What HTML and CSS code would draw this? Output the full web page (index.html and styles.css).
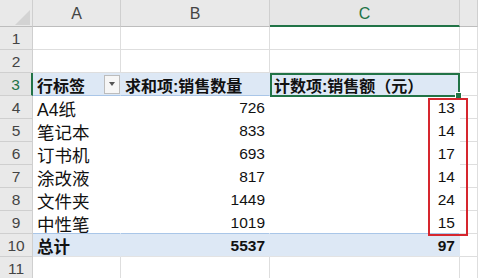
FILE: index.html
```html
<!DOCTYPE html>
<html lang="zh-CN">
<head>
<meta charset="utf-8">
<link rel="stylesheet" href="styles.css">
</head>
<body>
<div class="sheet">
  <div class="hd corner"><span class="tri"></span></div>
  <div class="hd col">A</div>
  <div class="hd col">B</div>
  <div class="hd col sel-col">C</div>
  <div class="hd col last"></div>

  <div class="hd row">1</div><div class="c"></div><div class="c"></div><div class="c"></div><div class="c last"></div>
  <div class="hd row">2</div><div class="c"></div><div class="c"></div><div class="c"></div><div class="c last"></div>

  <div class="hd row sel-row">3</div>
  <div class="c ph txt">行标签<span class="dd"><span class="ddtri"></span></span></div>
  <div class="c ph txt">求和项:销售数量</div>
  <div class="c ph txt">计数项:销售额（元）</div>
  <div class="c last"></div>

  <div class="hd row">4</div><div class="c pb txt">A4纸</div><div class="c pb num">726</div><div class="c pb num">13</div><div class="c last"></div>
  <div class="hd row">5</div><div class="c pb txt">笔记本</div><div class="c pb num">833</div><div class="c pb num">14</div><div class="c last"></div>
  <div class="hd row">6</div><div class="c pb txt">订书机</div><div class="c pb num">693</div><div class="c pb num">17</div><div class="c last"></div>
  <div class="hd row">7</div><div class="c pb txt">涂改液</div><div class="c pb num">817</div><div class="c pb num">14</div><div class="c last"></div>
  <div class="hd row">8</div><div class="c pb txt">文件夹</div><div class="c pb num">1449</div><div class="c pb num">24</div><div class="c last"></div>
  <div class="hd row">9</div><div class="c pb pre txt">中性笔</div><div class="c pb pre num">1019</div><div class="c pb pre num">15</div><div class="c last"></div>

  <div class="hd row">10</div>
  <div class="c pt txt bold">总计</div>
  <div class="c pt num bold">5537</div>
  <div class="c pt num bold">97</div>
  <div class="c last"></div>

  <div class="hd row">11</div><div class="c"></div><div class="c"></div><div class="c"></div><div class="c last"></div>

  <div class="active"><span class="handle"></span></div>
  <div class="mark"></div>
</div>
</body>
</html>
```

FILE: styles.css
```css
html, body {
  margin: 0;
  padding: 0;
  background: #ffffff;
}

.sheet {
  position: relative;
  display: grid;
  grid-template-columns: 33px 88px 149px 190px 18px;
  grid-template-rows: 27px repeat(11, 23px);
  width: 478px;
  height: 278px;
  overflow: hidden;
  font-family: "Liberation Sans", "Noto Sans CJK SC", sans-serif;
  color: #111;
}

.hd {
  box-sizing: border-box;
  background: #e9e9e9;
  border-right: 1px solid #cfcfcf;
  border-bottom: 1px solid #cfcfcf;
  color: #444;
  font-size: 16px;
  display: flex;
  align-items: center;
  justify-content: center;
}

.corner {
  position: relative;
  border-bottom: 1px solid #bdbdbd;
}

.tri {
  position: absolute;
  left: 15px;
  top: 10px;
  width: 0;
  height: 0;
  border-left: 15px solid transparent;
  border-bottom: 15px solid #d3d3d3;
}

.col {
  padding-top: 2px;
  border-bottom: 1px solid #bdbdbd;
}

.sel-col {
  color: #217346;
  background: #e6e6e6;
  border-bottom: 2px solid #217346;
}

.row {
  font-size: 15.5px;
  padding-top: 2px;
}

.sel-row {
  color: #217346;
  background: #e4e4e4;
  border-right: 2px solid #217346;
}

.c {
  box-sizing: border-box;
  border-right: 1px solid #dedede;
  border-bottom: 1px solid #dedede;
  display: flex;
  align-items: center;
  padding: 2px 4px 0 4px;
  white-space: nowrap;
  overflow: hidden;
}

.last {
  padding: 0;
}

.txt {
  font-size: 17.5px;
  justify-content: flex-start;
}

.num {
  font-size: 15.5px;
  justify-content: flex-end;
}

.ph {
  font-size: 16px;
  background: #dde8f5;
  border-right-color: #dde8f5;
  border-bottom: 1px solid #a9c6e8;
  font-weight: 700;
  padding-left: 4px;
}

.pb {
  background: #ffffff;
  border-right-color: #ffffff;
  border-bottom-color: #ffffff;
}

.pb.pre {
  border-bottom-color: #a9c6e8;
}

.pt {
  background: #dde8f5;
  border-right-color: #dde8f5;
  border-bottom-color: #e3e3e3;
}

.bold {
  font-weight: 700;
}

.pt.txt {
  font-size: 16.5px;
}

.dd {
  box-sizing: border-box;
  margin-left: auto;
  margin-right: -4px;
  width: 16px;
  height: 19px;
  margin-top: -2px;
  background: #f6f6f6;
  border: 1px solid #bcbcbc;
  display: flex;
  align-items: center;
  justify-content: center;
}

.ddtri {
  width: 0;
  height: 0;
  border-left: 3.5px solid transparent;
  border-right: 3.5px solid transparent;
  border-top: 4px solid #555;
}

.active {
  position: absolute;
  box-sizing: border-box;
  left: 270px;
  top: 73px;
  width: 190px;
  height: 24px;
  border: 2px solid #217346;
}

.handle {
  position: absolute;
  right: -4px;
  bottom: -4px;
  width: 5px;
  height: 5px;
  background: #217346;
  border: 1px solid #ffffff;
}

.mark {
  position: absolute;
  box-sizing: border-box;
  left: 428px;
  top: 98px;
  width: 40px;
  height: 138px;
  border: 2px solid #d6262e;
}
```
